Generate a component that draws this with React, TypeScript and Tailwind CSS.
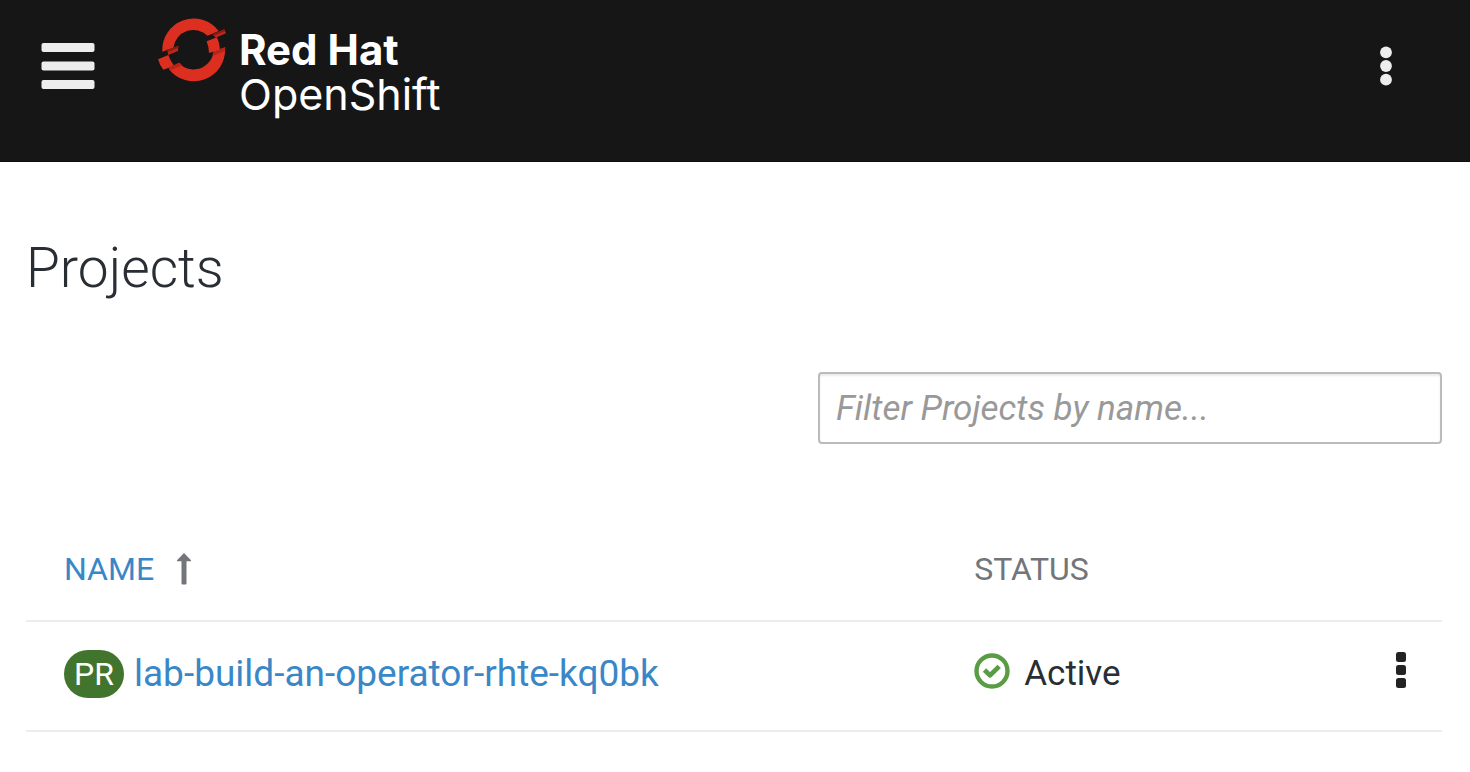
function OpenShiftMark() {
  return (
    <svg viewBox="21 18 213 198" className="h-[66px] w-[71px] shrink-0" aria-hidden="true">
      <path fill="#dd2f20" d="M37 125A94 94 0 0 1 206 63L173 77A61 61 0 0 0 70 113Z" />
      <path fill="#dd2f20" d="M56 176A94 94 0 0 0 225 112L191 124A61 61 0 0 1 98 169L88 158Z" />
      <path fill="#dd2f20" d="M24 148L55 135Q60 150 70 164L72 168L40 179Q29 166 24 148Z" />
      <path fill="#dd2f20" d="M170 94L201 82Q209 99 210 119L177 129Q176 109 170 94Z" />
      <path fill="#c0261b" d="M53 119L85 108L84 123L54 135Z" />
      <path fill="#8f1a12" d="M51 119L85 108V114L53 126Z" />
      <path fill="#b8241a" d="M57 172L87 158L97 166L64 180Z" />
      <path fill="#b8241a" d="M189 127L226 112L224 124L188 137Z" />
      <path fill="#c0261b" d="M190 75L223 58L228 70L197 83Z" />
      <path fill="#8f1a12" d="M186 73L222 58L225 64L193 77Z" />
    </svg>
  );
}

function Header() {
  return (
    <header className="flex h-[162px] items-start border-b border-[#100c10] bg-[#161616] pl-[41px] pr-[78px]">
      <button type="button" aria-label="Toggle navigation" className="mt-[43px] shrink-0">
        <svg viewBox="0 0 54 46" className="h-[46px] w-[54px]" fill="#ededed">
          <rect x="0.500" width="53" height="9" rx="2" />
          <rect x="0.500" y="18.500" width="53" height="9" rx="2" />
          <rect x="0.500" y="37" width="53" height="9" rx="2" />
        </svg>
      </button>
      <a href="#" className="ml-[62px] mt-4 flex items-start gap-[11px] text-white">
        <OpenShiftMark />
        <span className="mt-3 flex flex-col font-['Inter',sans-serif] leading-[44px]">
          <span className="text-[42px] font-bold">Red Hat</span>
          <span className="text-[43px]">OpenShift</span>
        </span>
      </a>
      <button type="button" aria-label="Header actions" className="ml-auto mt-[46px] shrink-0">
        <svg viewBox="0 0 12 40" className="h-10 w-3" fill="#ededed">
          <circle cx="6" cy="6.300" r="5.900" />
          <circle cx="6" cy="20" r="5.900" />
          <circle cx="6" cy="33.700" r="5.900" />
        </svg>
      </button>
    </header>
  );
}

const projects = [{ name: "lab-build-an-operator-rhte-kq0bk", status: "Active" }];

export default function App() {
  return (
    <div className="min-h-screen bg-white font-['Roboto',sans-serif] text-[#292e34]">
      <Header />
      <main className="pl-[26px] pr-7 pt-[72px]">
        <h1 className="text-[55px] font-light leading-[68px]">Projects</h1>
        <div className="mt-[70px] flex justify-end">
          <input
            type="text"
            aria-label="Filter Projects by name"
            placeholder="Filter Projects by name..."
            className="h-[72px] w-[624px] max-w-full rounded-sm border-2 border-[#bbbbbb] px-4 text-[35px] shadow-[inset_0_2px_2px_rgba(3,3,3,0.075)] outline-none placeholder:italic placeholder:text-[#999999]"
          />
        </div>
        <table className="mt-[70px] w-full table-fixed border-separate border-spacing-0 text-left">
          <thead>
            <tr className="text-[32px] leading-10 text-[#72767b]">
              <th scope="col" aria-sort="ascending" className="h-[108px] w-[64%] border-b-2 border-[#ededed] pl-[38px] pt-1 font-normal">
                <button type="button" className="flex items-center gap-[22px] text-[#3a87c8]">
                  NAME
                  <svg viewBox="0 0 16 32" className="h-8 w-4" fill="#72767b" aria-hidden="true">
                    <path d="M8 0L15 7.300Q15.500 8.300 14.500 8.300H10.500V30.500Q10.500 31.500 9.500 31.500H6.500Q5.500 31.500 5.500 30.500V8.300H1.500Q0.500 8.300 1 7.300Z" />
                  </svg>
                </button>
              </th>
              <th scope="col" className="border-b-2 border-[#ededed] pl-[42px] pt-1 font-normal">STATUS</th>
              <th scope="col" aria-label="Actions" className="w-20 border-b-2 border-[#ededed]" />
            </tr>
          </thead>
          <tbody>
            {projects.map((project) => (
              <tr key={project.name} className="leading-[44px]">
                <td className="h-[110px] border-b-2 border-[#ededed] pb-1 pl-[38px]">
                  <div className="flex items-center gap-[10px]">
                    <span className="flex h-12 w-[60px] shrink-0 items-center justify-center rounded-full bg-[#41752e] text-[32px] text-white">
                      PR
                    </span>
                    <a href="#" className="text-[37px] text-[#3a87c8]">{project.name}</a>
                  </div>
                </td>
                <td className="border-b-2 border-[#ededed] pb-1 pl-[42px]">
                  <div className="flex items-center gap-[14px] text-[35px]">
                    <svg viewBox="0 0 36 36" className="mb-[6px] h-9 w-9" fill="none" aria-hidden="true">
                      <circle cx="18" cy="18" r="15.500" stroke="#5a9c44" strokeWidth="4.400" />
                      <path d="M10.500 17L16 22.400L25.200 13.400" stroke="#5a9c44" strokeWidth="4.800" strokeLinejoin="round" />
                    </svg>
                    {project.status}
                  </div>
                </td>
                <td className="border-b-2 border-[#ededed] pb-1 pr-9">
                  <button type="button" aria-label="Project actions" className="mb-2 ml-auto block">
                    <svg viewBox="0 0 10 36" className="h-9 w-[10px]" fill="#232323">
                      <rect width="10" height="10" rx="2.500" />
                      <rect y="13" width="10" height="10" rx="2.500" />
                      <rect y="26" width="10" height="10" rx="2.500" />
                    </svg>
                  </button>
                </td>
              </tr>
            ))}
          </tbody>
        </table>
      </main>
    </div>
  );
}
